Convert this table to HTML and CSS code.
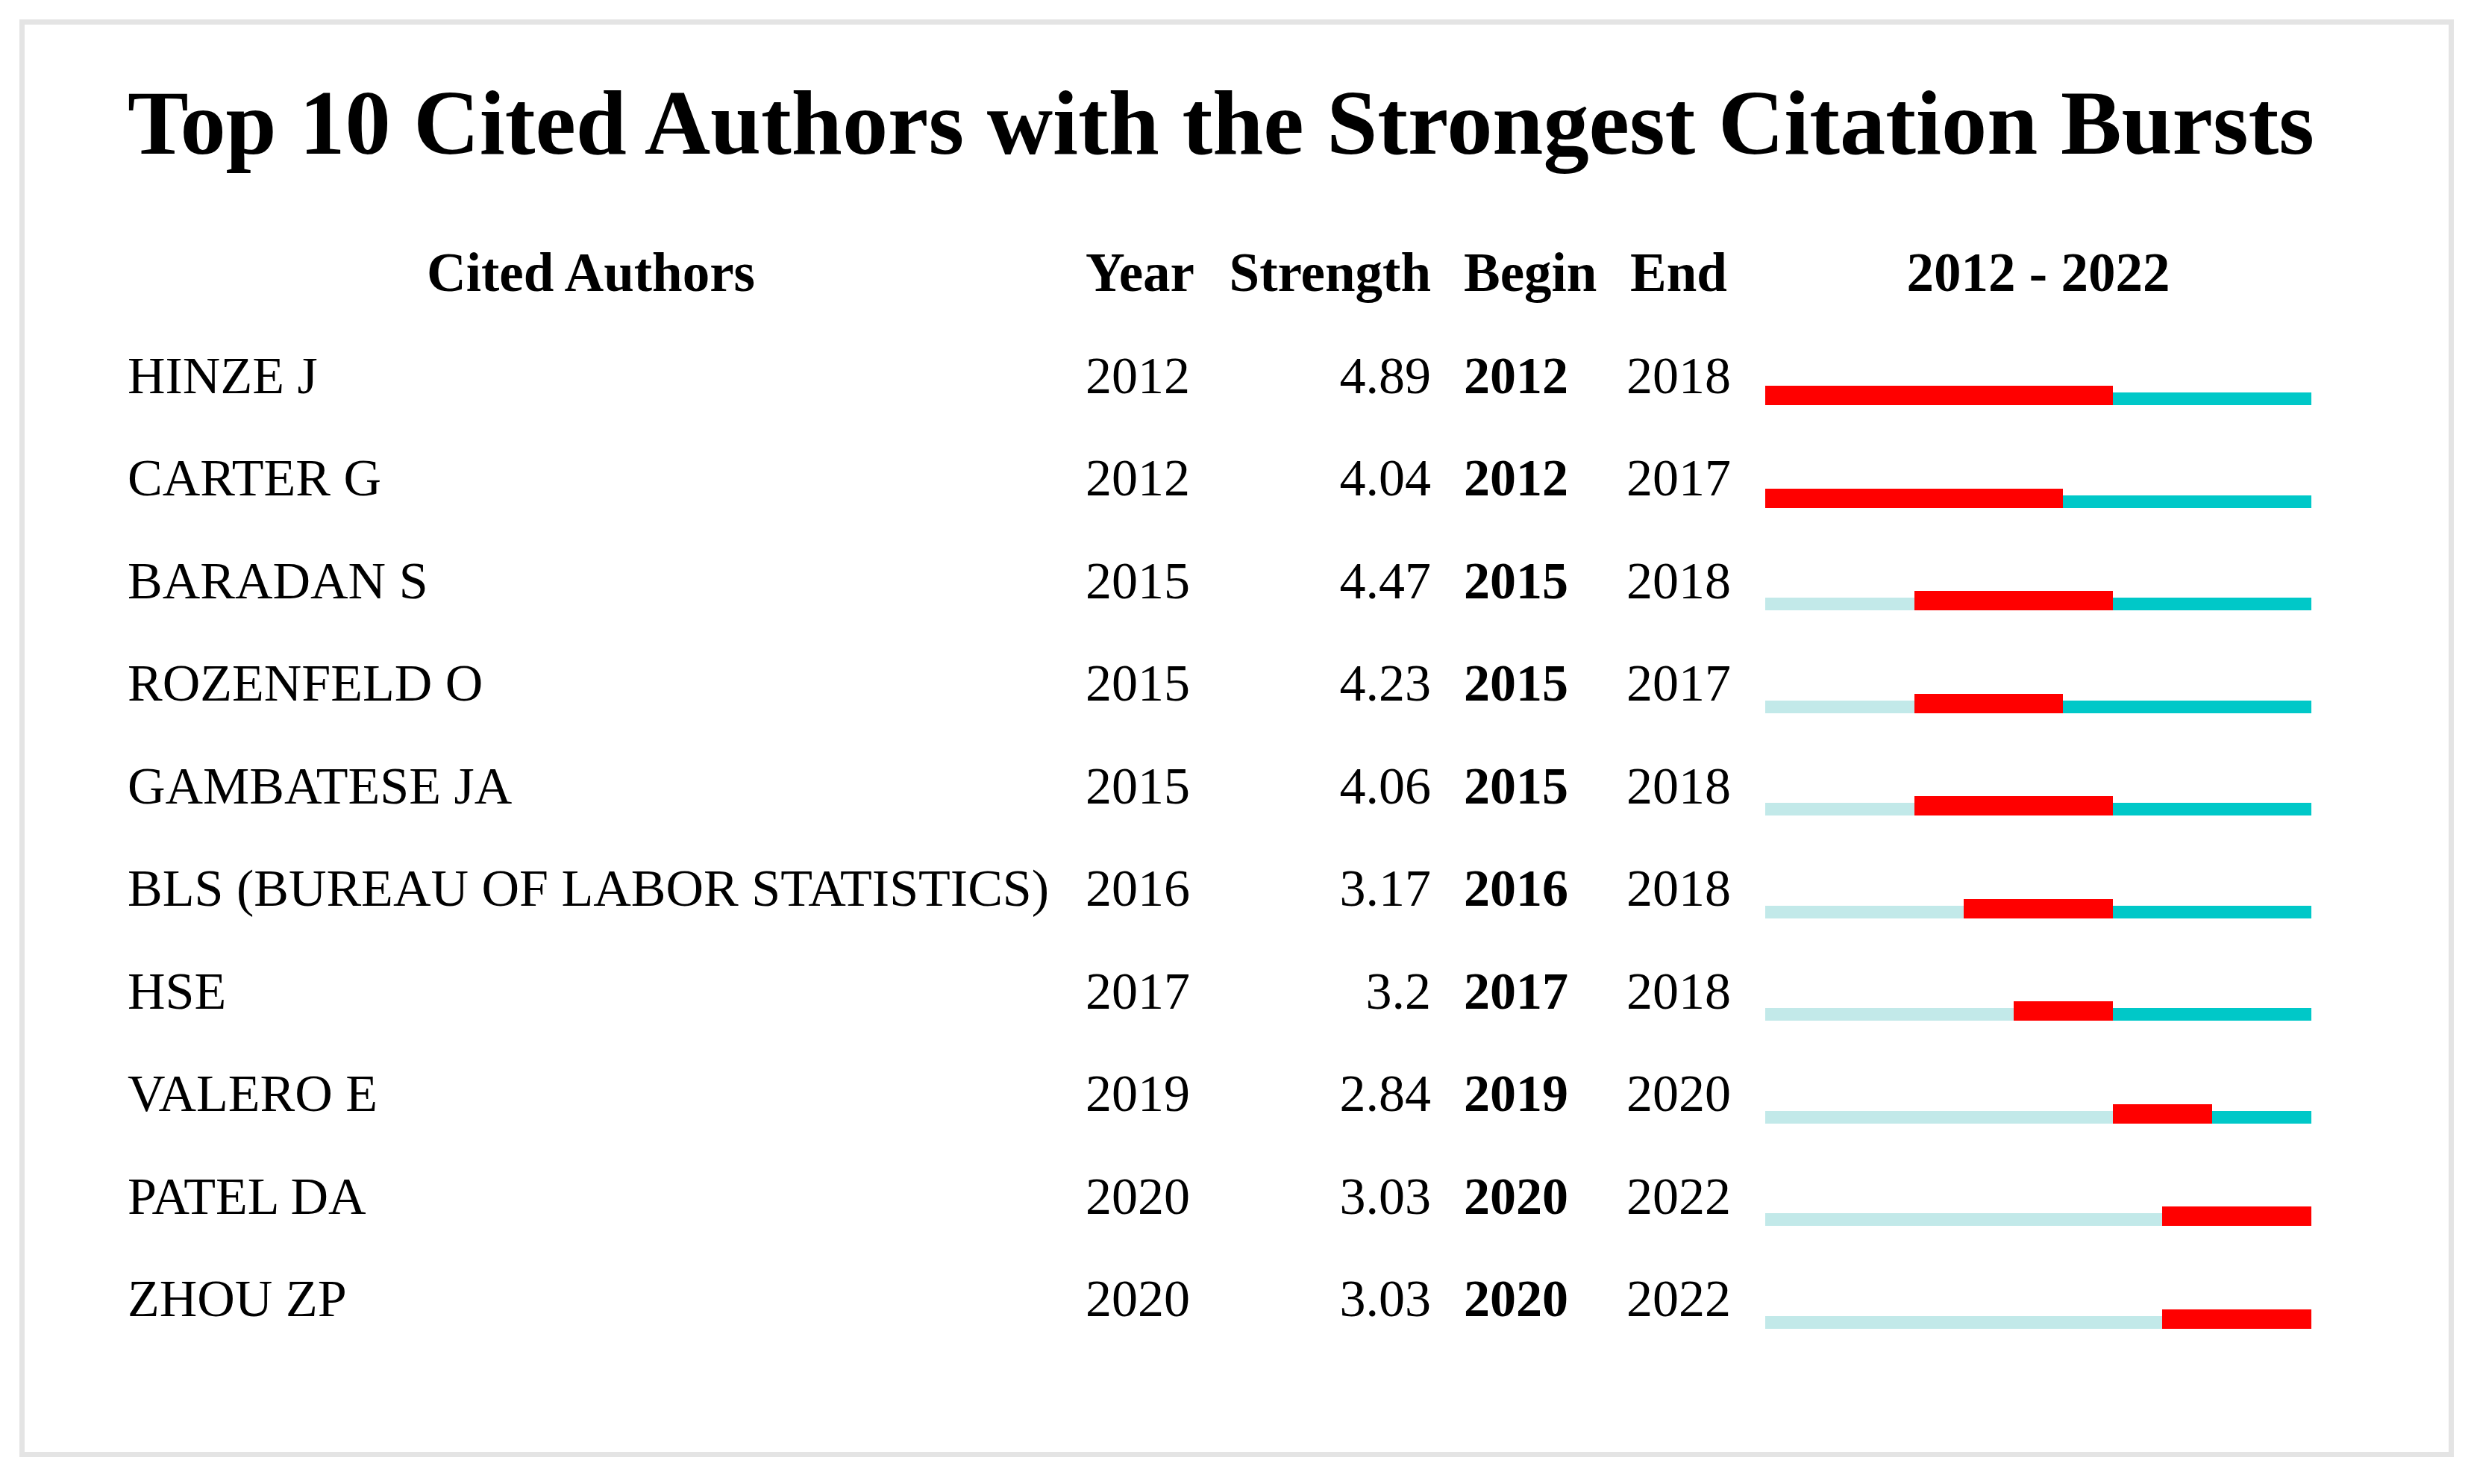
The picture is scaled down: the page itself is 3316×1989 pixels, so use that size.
FILE: index.html
```html
<!DOCTYPE html>
<html lang="en">
<head>
<meta charset="utf-8">
<title>Top 10 Cited Authors with the Strongest Citation Bursts</title>
<link rel="stylesheet" href="styles.css">
</head>
<body>
<div class="frame">
  <h1 class="title">Top 10 Cited Authors with the Strongest Citation Bursts</h1>
  <div class="table">
    <div class="row head">
      <div class="c-author">Cited Authors</div>
      <div class="c-year">Year</div>
      <div class="c-str">Strength</div>
      <div class="c-begin">Begin</div>
      <div class="c-end">End</div>
      <div class="c-range">2012 - 2022</div>
    </div>
    <div class="row">
      <div class="c-author">HINZE J</div><div class="c-year">2012</div><div class="c-str">4.89</div><div class="c-begin">2012</div><div class="c-end">2018</div>
      <div class="c-bar"><span class="seg burst"></span><span class="seg burst"></span><span class="seg burst"></span><span class="seg burst"></span><span class="seg burst"></span><span class="seg burst"></span><span class="seg burst"></span><span class="seg post"></span><span class="seg post"></span><span class="seg post"></span><span class="seg post"></span></div>
    </div>
    <div class="row">
      <div class="c-author">CARTER G</div><div class="c-year">2012</div><div class="c-str">4.04</div><div class="c-begin">2012</div><div class="c-end">2017</div>
      <div class="c-bar"><span class="seg burst"></span><span class="seg burst"></span><span class="seg burst"></span><span class="seg burst"></span><span class="seg burst"></span><span class="seg burst"></span><span class="seg post"></span><span class="seg post"></span><span class="seg post"></span><span class="seg post"></span><span class="seg post"></span></div>
    </div>
    <div class="row">
      <div class="c-author">BARADAN S</div><div class="c-year">2015</div><div class="c-str">4.47</div><div class="c-begin">2015</div><div class="c-end">2018</div>
      <div class="c-bar"><span class="seg pre"></span><span class="seg pre"></span><span class="seg pre"></span><span class="seg burst"></span><span class="seg burst"></span><span class="seg burst"></span><span class="seg burst"></span><span class="seg post"></span><span class="seg post"></span><span class="seg post"></span><span class="seg post"></span></div>
    </div>
    <div class="row">
      <div class="c-author">ROZENFELD O</div><div class="c-year">2015</div><div class="c-str">4.23</div><div class="c-begin">2015</div><div class="c-end">2017</div>
      <div class="c-bar"><span class="seg pre"></span><span class="seg pre"></span><span class="seg pre"></span><span class="seg burst"></span><span class="seg burst"></span><span class="seg burst"></span><span class="seg post"></span><span class="seg post"></span><span class="seg post"></span><span class="seg post"></span><span class="seg post"></span></div>
    </div>
    <div class="row">
      <div class="c-author">GAMBATESE JA</div><div class="c-year">2015</div><div class="c-str">4.06</div><div class="c-begin">2015</div><div class="c-end">2018</div>
      <div class="c-bar"><span class="seg pre"></span><span class="seg pre"></span><span class="seg pre"></span><span class="seg burst"></span><span class="seg burst"></span><span class="seg burst"></span><span class="seg burst"></span><span class="seg post"></span><span class="seg post"></span><span class="seg post"></span><span class="seg post"></span></div>
    </div>
    <div class="row">
      <div class="c-author">BLS (BUREAU OF LABOR STATISTICS)</div><div class="c-year">2016</div><div class="c-str">3.17</div><div class="c-begin">2016</div><div class="c-end">2018</div>
      <div class="c-bar"><span class="seg pre"></span><span class="seg pre"></span><span class="seg pre"></span><span class="seg pre"></span><span class="seg burst"></span><span class="seg burst"></span><span class="seg burst"></span><span class="seg post"></span><span class="seg post"></span><span class="seg post"></span><span class="seg post"></span></div>
    </div>
    <div class="row">
      <div class="c-author">HSE</div><div class="c-year">2017</div><div class="c-str">3.2</div><div class="c-begin">2017</div><div class="c-end">2018</div>
      <div class="c-bar"><span class="seg pre"></span><span class="seg pre"></span><span class="seg pre"></span><span class="seg pre"></span><span class="seg pre"></span><span class="seg burst"></span><span class="seg burst"></span><span class="seg post"></span><span class="seg post"></span><span class="seg post"></span><span class="seg post"></span></div>
    </div>
    <div class="row">
      <div class="c-author">VALERO E</div><div class="c-year">2019</div><div class="c-str">2.84</div><div class="c-begin">2019</div><div class="c-end">2020</div>
      <div class="c-bar"><span class="seg pre"></span><span class="seg pre"></span><span class="seg pre"></span><span class="seg pre"></span><span class="seg pre"></span><span class="seg pre"></span><span class="seg pre"></span><span class="seg burst"></span><span class="seg burst"></span><span class="seg post"></span><span class="seg post"></span></div>
    </div>
    <div class="row">
      <div class="c-author">PATEL DA</div><div class="c-year">2020</div><div class="c-str">3.03</div><div class="c-begin">2020</div><div class="c-end">2022</div>
      <div class="c-bar"><span class="seg pre"></span><span class="seg pre"></span><span class="seg pre"></span><span class="seg pre"></span><span class="seg pre"></span><span class="seg pre"></span><span class="seg pre"></span><span class="seg pre"></span><span class="seg burst"></span><span class="seg burst"></span><span class="seg burst"></span></div>
    </div>
    <div class="row">
      <div class="c-author">ZHOU ZP</div><div class="c-year">2020</div><div class="c-str">3.03</div><div class="c-begin">2020</div><div class="c-end">2022</div>
      <div class="c-bar"><span class="seg pre"></span><span class="seg pre"></span><span class="seg pre"></span><span class="seg pre"></span><span class="seg pre"></span><span class="seg pre"></span><span class="seg pre"></span><span class="seg pre"></span><span class="seg burst"></span><span class="seg burst"></span><span class="seg burst"></span></div>
    </div>
  </div>
</div>
</body>
</html>
```

FILE: styles.css
```css
html, body {
  margin: 0;
  padding: 0;
  background: #ffffff;
}

body {
  font-family: "Liberation Serif", "Times New Roman", serif;
  color: #000000;
}

.frame {
  margin: 26px;
  border: 7px solid #e4e4e4;
  padding: 62px 0 0 138px;
  box-sizing: content-box;
  width: 3111px;
  height: 1851px;
}

.title {
  margin: 0;
  font-size: 122.4px;
  line-height: 140px;
  font-weight: bold;
  white-space: nowrap;
}

.table {
  margin-top: 62px;
  display: flex;
  flex-direction: column;
}

.row {
  display: grid;
  grid-template-columns: 1242px 227px 278px 244px 204px 732px;
  height: 137.5px;
  line-height: 137.5px;
  font-size: 70px;
  white-space: nowrap;
}

.row.head {
  font-size: 73px;
  font-weight: bold;
}

.c-author {
  text-align: left;
}

.head .c-author {
  text-align: center;
}

.c-year {
  padding-left: 42px;
}

.c-str {
  text-align: right;
}

.c-begin {
  padding-left: 44px;
  font-weight: bold;
}

.c-end {
  text-align: center;
  padding-right: 28px;
}

.c-range {
  text-align: center;
}

.c-bar {
  display: flex;
  align-items: flex-end;
  padding-bottom: 29px;
}

.seg {
  flex: 1 1 0;
  display: block;
}

.seg.pre {
  height: 17px;
  background: #c2e9e9;
}

.seg.burst {
  height: 26px;
  background: #ff0000;
}

.seg.post {
  height: 17px;
  background: #00c8c8;
}
```
